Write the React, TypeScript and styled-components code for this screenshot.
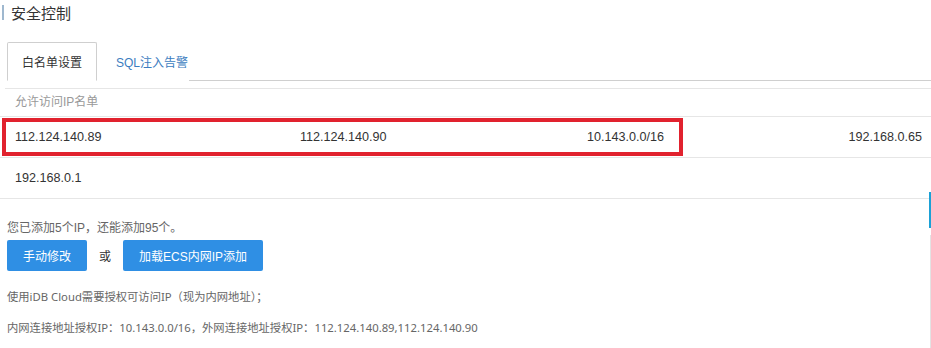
import { createGlobalStyle } from "styled-components";
import styled from "styled-components";

const GlobalStyle = createGlobalStyle`
  html, body {
    margin: 0;
    padding: 0;
    background: #fff;
  }
  body {
    font-family: "Liberation Sans", "Noto Sans CJK SC", sans-serif;
    font-size: 12px;
    color: #333;
  }
`;

const Page = styled.div`
  position: relative;
  width: 931px;
  height: 348px;
  overflow: hidden;
`;

const Title = styled.h2`
  display: flex;
  align-items: center;
  height: 24px;
  margin: 0;
  font-size: 15px;
  font-weight: normal;
  color: #333;

  &::before {
    content: "";
    width: 2px;
    height: 15px;
    margin: 0 7px 0 2px;
    background: #9fb8cf;
  }
`;

const TabBar = styled.div`
  display: flex;
  height: 39px;
  margin: 18px 0 0 7px;
  border-bottom: 1px solid #cfcfcf;
  box-sizing: border-box;
`;

const Tab = styled.div<{ $active?: boolean }>`
  display: flex;
  align-items: center;
  justify-content: center;
  width: ${(p) => (p.$active ? "90px" : "auto")};
  height: 39px;
  padding: ${(p) => (p.$active ? "0" : "0 0 0 18px")};
  margin-bottom: -1px;
  box-sizing: border-box;
  border: 1px solid ${(p) => (p.$active ? "#cfcfcf" : "transparent")};
  border-bottom-color: ${(p) => (p.$active ? "#fff" : "transparent")};
  border-radius: 2px 2px 0 0;
  background: #fff;
  color: ${(p) => (p.$active ? "#333" : "#3b7dc0")};
  cursor: pointer;
`;

const ListHeader = styled.div`
  height: 28px;
  margin: 7px 0 0 5px;
  padding-left: 10px;
  box-sizing: border-box;
  border-top: 1px solid #e6e6e6;
  line-height: 26px;
  color: #999;
`;

const IpRow = styled.div`
  position: relative;
  display: grid;
  grid-template-columns: 285px 287px 1fr auto;
  align-items: center;
  height: 41px;
  padding: 0 9px 0 15px;
  box-sizing: border-box;
  border-top: 1px solid #e6e6e6;
  font-size: 12.6px;
  color: #333;

  &:last-of-type {
    border-bottom: 1px solid #e6e6e6;
    height: 42px;
  }
`;

const Highlight = styled.div`
  position: absolute;
  top: 1px;
  left: 2px;
  width: 681px;
  height: 38px;
  box-sizing: border-box;
  border: 4px solid #e1222e;
  pointer-events: none;
`;

const LastCell = styled.span`
  justify-self: end;
`;

const Footer = styled.div`
  padding: 20px 0 0 7px;
`;

const Note = styled.div`
  line-height: 18px;
  color: #666;
`;

const Actions = styled.div`
  display: flex;
  align-items: center;
  gap: 12px;
  margin-top: 3px;
`;

const Button = styled.button`
  height: 31px;
  padding: 0 16px;
  border: none;
  border-radius: 2px;
  background: #2f8fe4;
  color: #fff;
  font-family: inherit;
  font-size: 12px;
  cursor: pointer;
`;

const Or = styled.span`
  color: #333;
`;

const Info = styled.div`
  margin-top: 10px;
  font-family: "Noto Sans", "Noto Sans CJK SC", sans-serif;
  font-size: 11.3px;
`;

const InfoLine = styled.div`
  line-height: 31px;
  color: #666;
`;

const EdgeTab = styled.div`
  position: absolute;
  right: 0;
  top: 192px;
  width: 2px;
  height: 36px;
  background: #1ba1d6;
`;

const EdgeLine = styled.div`
  position: absolute;
  right: 0;
  top: 235px;
  bottom: 0;
  width: 1px;
  background: #e3e3e3;
`;

const rows = [
  ["112.124.140.89", "112.124.140.90", "10.143.0.0/16", "192.168.0.65"],
  ["192.168.0.1"],
];

export default function App() {
  return (
    <>
      <GlobalStyle />
      <Page>
        <Title>安全控制</Title>
        <TabBar>
          <Tab $active>白名单设置</Tab>
          <Tab>SQL注入告警</Tab>
        </TabBar>
        <ListHeader>允许访问IP名单</ListHeader>
        <div>
          {rows.map((ips, i) => (
            <IpRow key={i}>
              {ips.map((ip, j) =>
                j === 3 ? <LastCell key={ip}>{ip}</LastCell> : <span key={ip}>{ip}</span>
              )}
              {i === 0 && <Highlight />}
            </IpRow>
          ))}
        </div>
        <Footer>
          <Note>您已添加5个IP，还能添加95个。</Note>
          <Actions>
            <Button>手动修改</Button>
            <Or>或</Or>
            <Button>加载ECS内网IP添加</Button>
          </Actions>
          <Info>
            <InfoLine>使用iDB Cloud需要授权可访问IP（现为内网地址）；</InfoLine>
            <InfoLine>
              内网连接地址授权IP：10.143.0.0/16，外网连接地址授权IP：112.124.140.89,112.124.140.90
            </InfoLine>
          </Info>
        </Footer>
        <EdgeTab />
        <EdgeLine />
      </Page>
    </>
  );
}
